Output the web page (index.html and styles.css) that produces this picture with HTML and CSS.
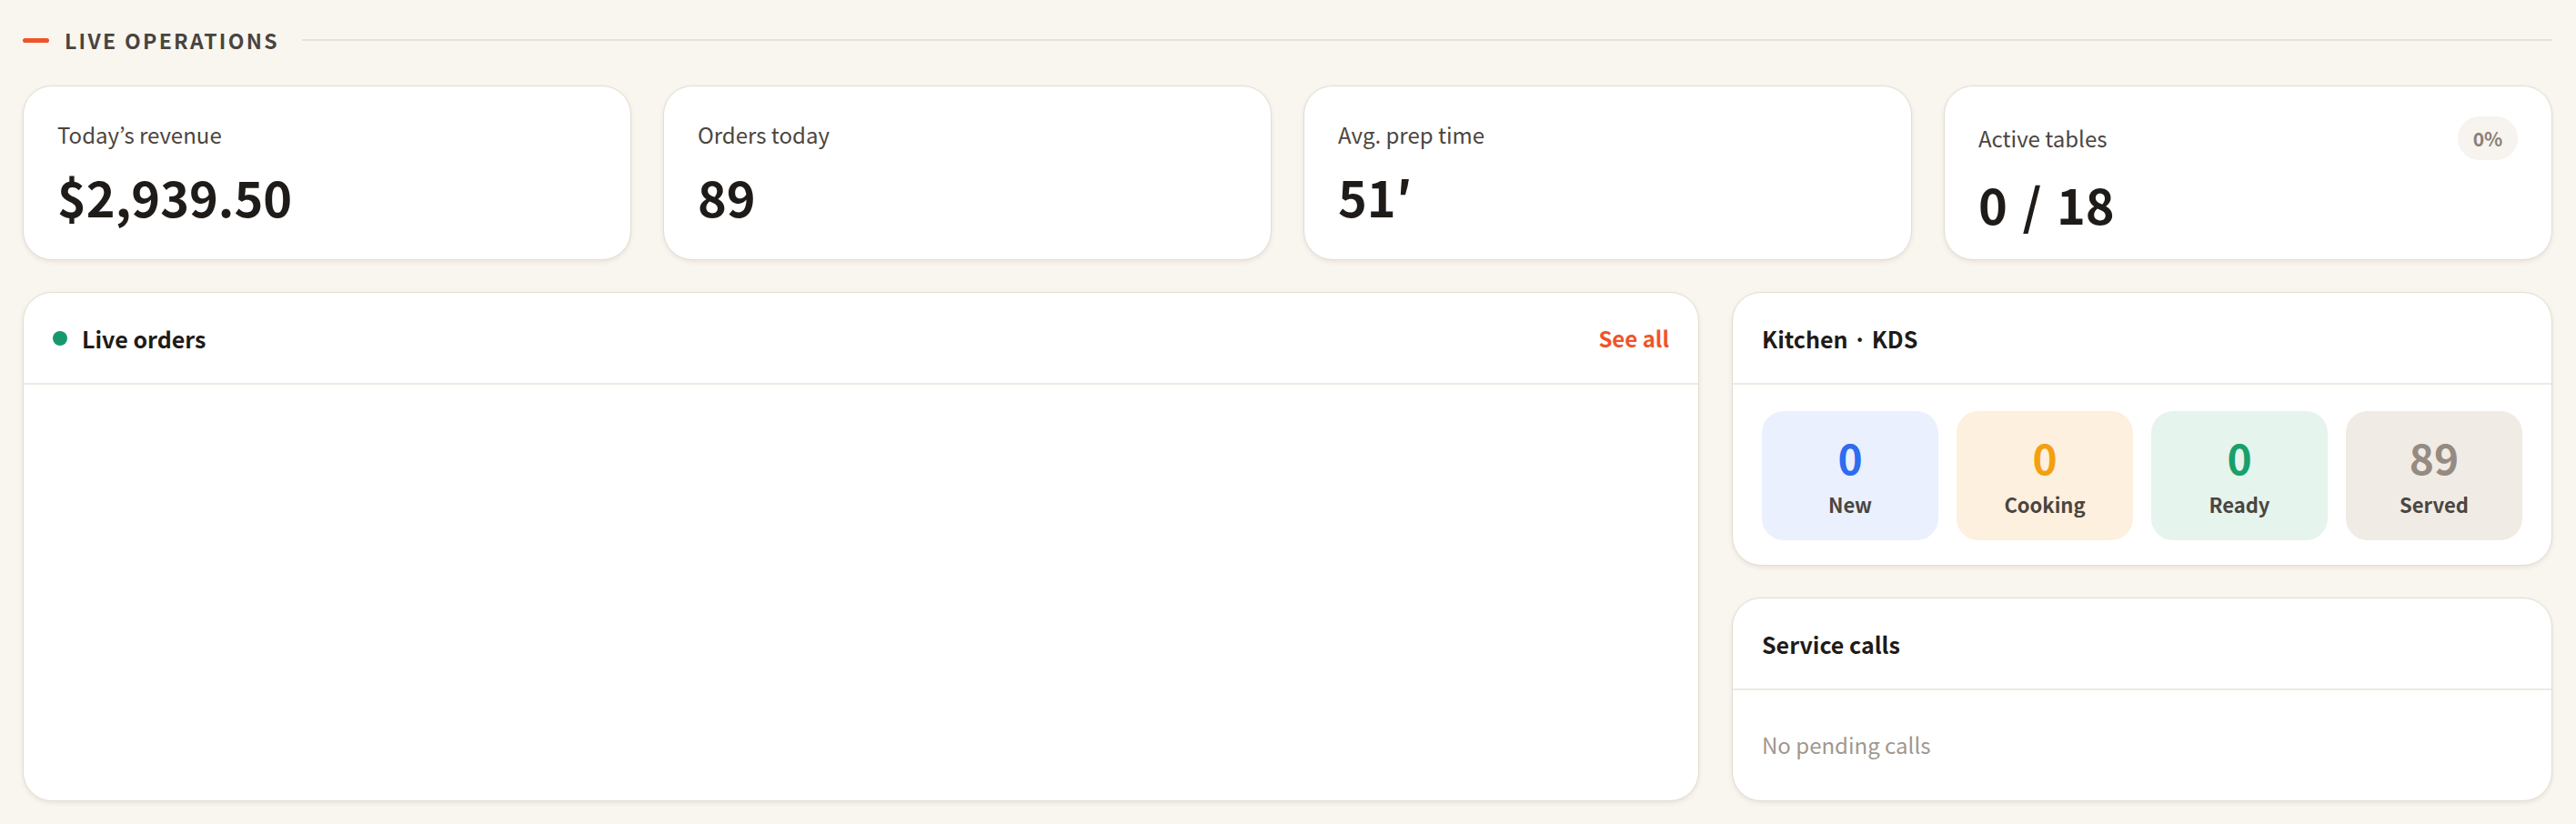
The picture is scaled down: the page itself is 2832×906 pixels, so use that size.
FILE: index.html
```html
<!DOCTYPE html>
<html lang="en">
<head>
<meta charset="utf-8">
<title>Live operations</title>
<link rel="stylesheet" href="styles.css">
</head>
<body>
<main class="page">
  <div class="section-head">
    <span class="dash"></span>
    <h2 class="section-title">Live operations</h2>
    <span class="rule"></span>
  </div>

  <div class="stats">
    <div class="stat">
      <div class="stat-top"><span class="stat-label">Today’s revenue</span></div>
      <div class="stat-value">$2,939.50</div>
    </div>
    <div class="stat">
      <div class="stat-top"><span class="stat-label">Orders today</span></div>
      <div class="stat-value">89</div>
    </div>
    <div class="stat">
      <div class="stat-top"><span class="stat-label">Avg. prep time</span></div>
      <div class="stat-value">51′</div>
    </div>
    <div class="stat">
      <div class="stat-top"><span class="stat-label">Active tables</span><span class="badge">0%</span></div>
      <div class="stat-value">0 / 18</div>
    </div>
  </div>

  <div class="board">
    <section class="panel live">
      <header class="panel-head">
        <div class="panel-title"><span class="dot"></span>Live orders</div>
        <a class="see-all" href="#">See all</a>
      </header>
      <div class="panel-body live-body"></div>
    </section>

    <div class="side">
      <section class="panel">
        <header class="panel-head">
          <div class="panel-title">Kitchen · KDS</div>
        </header>
        <div class="panel-body kds">
          <div class="tile tile-new"><div class="tile-num">0</div><div class="tile-label">New</div></div>
          <div class="tile tile-cooking"><div class="tile-num">0</div><div class="tile-label">Cooking</div></div>
          <div class="tile tile-ready"><div class="tile-num">0</div><div class="tile-label">Ready</div></div>
          <div class="tile tile-served"><div class="tile-num">89</div><div class="tile-label">Served</div></div>
        </div>
      </section>

      <section class="panel calls">
        <header class="panel-head">
          <div class="panel-title">Service calls</div>
        </header>
        <div class="panel-body calls-body">
          <p class="empty">No pending calls</p>
        </div>
      </section>
    </div>
  </div>
</main>
</body>
</html>
```

FILE: styles.css
```css
* { box-sizing: border-box; }

html, body {
  margin: 0;
  padding: 0;
  background: #f9f6f0;
}

body {
  font-family: "Noto Sans CJK KR", "Noto Sans", "Liberation Sans", sans-serif;
  color: #1f1b18;
}

.page {
  padding: 29px 26px 25px 25px;
}

/* Section header */
.section-head {
  display: flex;
  align-items: center;
  height: 30px;
  margin-bottom: 35px;
}

.dash {
  width: 29px;
  height: 5px;
  border-radius: 3px;
  background: #f0542a;
  margin-right: 17px;
}

.section-title {
  margin: 0;
  font-size: 23px;
  font-weight: 700;
  letter-spacing: 0.1em;
  text-transform: uppercase;
  color: #4a443e;
  line-height: 30px;
}

.rule {
  flex: 1;
  height: 2px;
  background: #e7e1d8;
  margin-left: 25px;
}

/* Stat cards */
.stats {
  display: grid;
  grid-template-columns: repeat(4, 1fr);
  gap: 35px;
  margin-bottom: 35px;
}

.stat {
  background: #fff;
  border: 1px solid #e4ddd2;
  border-radius: 32px;
  box-shadow: 0 2px 5px rgba(90, 70, 40, 0.1);
  padding: 33px 37px 24px;
  height: 192px;
}

.stat-top {
  display: flex;
  align-items: center;
  justify-content: space-between;
  min-height: 40px;
}

.stat-label {
  font-size: 24px;
  line-height: 40px;
  color: #4b4540;
}

.badge {
  height: 48px;
  min-width: 66px;
  padding: 0 14px;
  border-radius: 24px;
  background: #f7f3ee;
  color: #8a8078;
  font-size: 21px;
  font-weight: 700;
  display: flex;
  align-items: center;
  justify-content: center;
}

.stat-value {
  margin-top: 16px;
  font-size: 54px;
  font-weight: 700;
  line-height: 64px;
  color: #1f1b18;
  word-spacing: 0.08em;
}

/* Board */
.board {
  display: grid;
  grid-template-columns: 1fr 902px;
  gap: 36px;
}

.side {
  display: flex;
  flex-direction: column;
  gap: 35px;
}

.panel {
  background: #fff;
  border: 1px solid #e4ddd2;
  border-radius: 32px;
  box-shadow: 0 2px 5px rgba(90, 70, 40, 0.1);
  display: flex;
  flex-direction: column;
  overflow: hidden;
}

.panel-head {
  height: 101px;
  flex: none;
  padding: 0 32px;
  display: flex;
  align-items: center;
  justify-content: space-between;
  border-bottom: 2px solid #eee9e1;
}

.panel-title {
  display: flex;
  align-items: center;
  font-size: 25px;
  font-weight: 700;
  color: #1f1b18;
}

.dot {
  width: 16px;
  height: 16px;
  border-radius: 50%;
  background: #16996a;
  margin-right: 16px;
}

.see-all {
  font-size: 24px;
  font-weight: 700;
  color: #f0542a;
  text-decoration: none;
}

.live-body {
  flex: 1;
}

/* Kitchen tiles */
.kds {
  display: grid;
  grid-template-columns: repeat(4, 1fr);
  gap: 20px;
  padding: 29px 32px 27px;
}

.tile {
  border-radius: 24px;
  padding: 21px 0 25px;
  text-align: center;
}

.tile-num {
  font-size: 46px;
  font-weight: 700;
  line-height: 58px;
}

.tile-label {
  margin-top: 8px;
  font-size: 22px;
  font-weight: 700;
  line-height: 30px;
  color: #4b4540;
}

.tile-new { background: #eaf0fd; }
.tile-new .tile-num { color: #2f6cf0; }
.tile-cooking { background: #fdf0de; }
.tile-cooking .tile-num { color: #f2a012; }
.tile-ready { background: #e5f4ec; }
.tile-ready .tile-num { color: #17a06b; }
.tile-served { background: #f0ebe4; }
.tile-served .tile-num { color: #958b82; }

/* Service calls */
.calls {
  height: 224px;
}

.calls-body {
  flex: 1;
  padding: 42px 32px 43px;
}

.empty {
  margin: 0;
  font-size: 24px;
  line-height: 36px;
  color: #a0978e;
}
```
